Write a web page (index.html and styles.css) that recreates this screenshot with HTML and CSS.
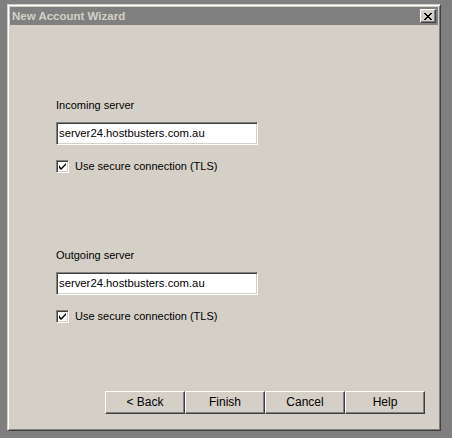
FILE: index.html
```html
<!DOCTYPE html>
<html lang="en">
<head>
    <meta charset="UTF-8">
    <title>New Account Wizard</title>
    <link rel="stylesheet" href="styles.css">
</head>
<body>

    <div class="dialog">
        <!-- Title bar (inactive) -->
        <div class="titlebar">
            <span class="title">New Account Wizard</span>
            <span class="close">
                <svg width="8" height="7" viewBox="0 0 8 7">
                    <path d="M0 0h2v1h1v1h2v-1h1v-1h2v1h-1v1h-1v1h-1v1h1v1h1v1h1v1h-2v-1h-1v-1h-2v1h-1v1h-2v-1h1v-1h1v-1h1v-1h-1v-1h-1v-1h-1z" fill="#000"/>
                </svg>
            </span>
        </div>

        <div class="body">
            <div class="server first">
                <div class="label">Incoming server</div>
                <div class="field">server24.hostbusters.com.au</div>
                <div class="check">
                    <span class="box">
                        <svg width="7" height="7" viewBox="0 0 7 7">
                            <path d="M0 2v3l2 2l5-5v-2l-5 5z" fill="#000"/>
                        </svg>
                    </span>
                    <span>Use secure connection (TLS)</span>
                </div>
            </div>

            <div class="server second">
                <div class="label">Outgoing server</div>
                <div class="field">server24.hostbusters.com.au</div>
                <div class="check">
                    <span class="box">
                        <svg width="7" height="7" viewBox="0 0 7 7">
                            <path d="M0 2v3l2 2l5-5v-2l-5 5z" fill="#000"/>
                        </svg>
                    </span>
                    <span>Use secure connection (TLS)</span>
                </div>
            </div>

            <!-- Wizard buttons -->
            <div class="buttons">
                <div class="btn">&lt; Back</div>
                <div class="btn">Finish</div>
                <div class="btn">Cancel</div>
                <div class="btn">Help</div>
            </div>
        </div>
    </div>

</body>
</html>
```

FILE: styles.css
```css
/* General Styles */
body {
    margin: 0;
    padding: 4px 0 0 7px;
    background-color: #7f7f7f;
    font-family: 'Liberation Sans', Arial, sans-serif;
    font-size: 11px;
    color: #000;
}

.dialog {
    box-sizing: border-box;
    width: 434px;
    height: 427px;
    background-color: #d4d0c8;
    border: 1px solid;
    border-color: #d4d0c8 #404040 #404040 #d4d0c8;
    box-shadow: inset 1px 1px #fff, inset -1px -1px #808080;
    padding: 2px;
    display: flex;
    flex-direction: column;
}

/* Title bar */
.titlebar {
    height: 18px;
    background-color: #808080;
    display: flex;
    align-items: center;
    justify-content: space-between;
    padding: 0 2px 0 2px;
}

.title {
    color: #d4d0c8;
    font-weight: bold;
    font-size: 11.5px;
}

.close {
    box-sizing: border-box;
    width: 16px;
    height: 14px;
    background-color: #d4d0c8;
    border: 1px solid;
    border-color: #fff #404040 #404040 #fff;
    box-shadow: inset -1px -1px #808080;
    display: flex;
    align-items: center;
    justify-content: center;
}

/* Body */
.body {
    flex: 1;
    display: flex;
    flex-direction: column;
    padding: 0 13px 14px 46px;
}

.server.first {
    margin-top: 73px;
}

.server.second {
    margin-top: 75px;
}

.label {
    height: 14px;
    line-height: 14px;
}

.field {
    box-sizing: border-box;
    width: 202px;
    height: 23px;
    margin-top: 10px;
    background-color: #fff;
    border: 1px solid;
    border-color: #808080 #fff #fff #808080;
    box-shadow: inset 1px 1px #404040, inset -1px -1px #d4d0c8;
    padding: 0 0 0 2px;
    font-size: 11.3px;
    line-height: 21px;
}

.check {
    display: flex;
    align-items: center;
    gap: 6px;
    margin-top: 14px;
    height: 14px;
    font-size: 11px;
}

.box {
    box-sizing: border-box;
    width: 13px;
    height: 13px;
    background-color: #fff;
    border: 1px solid;
    border-color: #808080 #fff #fff #808080;
    box-shadow: inset 1px 1px #404040, inset -1px -1px #d4d0c8;
    display: flex;
    align-items: center;
    justify-content: center;
}

/* Buttons */
.buttons {
    margin-top: auto;
    display: flex;
    justify-content: flex-end;
}

.btn {
    box-sizing: border-box;
    width: 80px;
    height: 23px;
    border: 1px solid;
    border-color: #fff #404040 #404040 #fff;
    box-shadow: inset -1px -1px #808080;
    text-align: center;
    line-height: 21px;
    font-size: 12px;
}
```
